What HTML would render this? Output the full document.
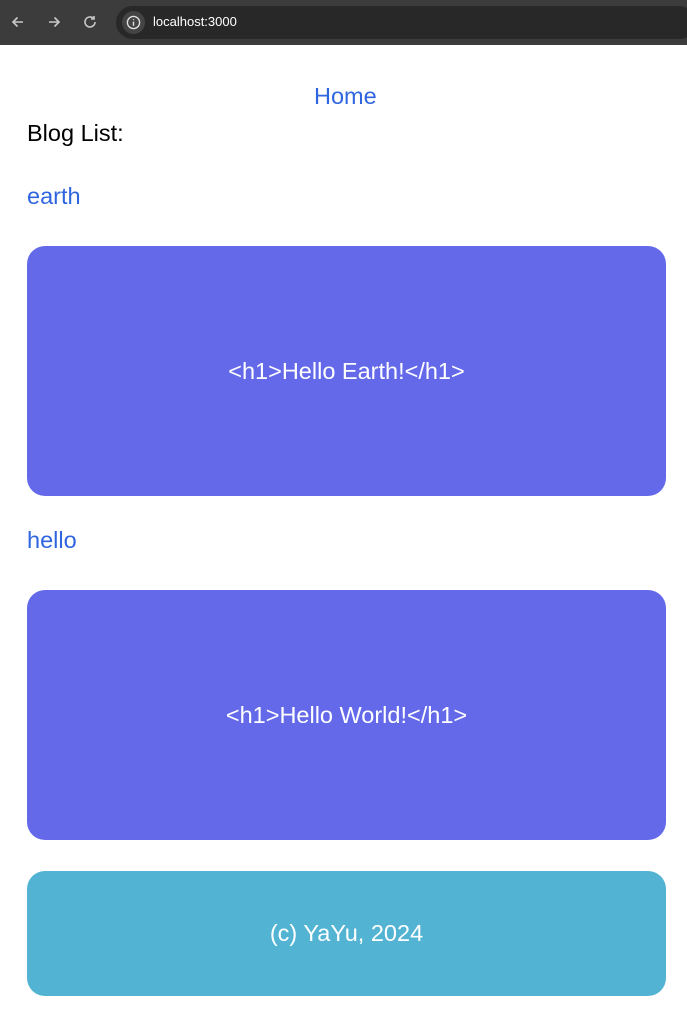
<!DOCTYPE html>
<html><head><meta charset="utf-8"><style>
body{margin:0;width:687px;height:1018px;background:#fff;font-family:"Liberation Sans",sans-serif;position:relative;overflow:hidden}
.bar{position:absolute;left:0;top:0;width:687px;height:45px;background:#3c3c3c}
.url{position:absolute;left:116px;top:6px;width:580px;height:33px;border-radius:17px;background:#282828}
.info{position:absolute;left:122px;top:11px;width:23px;height:23px;border-radius:50%;background:#444}
.t{position:absolute;color:#fff;font-size:13px}
.a{position:absolute;color:#2f66e0;font-size:23.5px}
.box{position:absolute;left:27px;width:639px;border-radius:18px;color:#fff;font-size:23.5px;display:flex;align-items:center;justify-content:center}
</style></head><body>
<div class="bar">
<svg style="position:absolute;left:10px;top:14px" width="16" height="16" viewBox="0 0 16 16" fill="none" stroke="#c8c8c8" stroke-width="1.6"><path d="M13 8H3M7.5 3.5L3 8l4.5 4.5"/></svg>
<svg style="position:absolute;left:46px;top:14px" width="16" height="16" viewBox="0 0 16 16" fill="none" stroke="#c8c8c8" stroke-width="1.6"><path d="M3 8h10M8.5 3.5L13 8l-4.5 4.5"/></svg>
<svg style="position:absolute;left:82px;top:14px" width="16" height="16" viewBox="0 0 16 16" fill="none" stroke="#c8c8c8" stroke-width="1.6"><path d="M13 8a5 5 0 1 1-1.5-3.6"/><path d="M12 2v3h-3"/></svg>
<div class="url"></div><div class="info"></div>
<svg style="position:absolute;left:126px;top:15px" width="15" height="15" viewBox="0 0 16 16" fill="none" stroke="#e0e0e0" stroke-width="1.5"><circle cx="8" cy="8" r="6.5"/><path d="M8 7v4.5M8 4.5v1"/></svg>
<div class="t" style="left:153px;top:14px">localhost:3000</div>
</div>
<div class="a" style="left:314px;top:83px">Home</div>
<div style="position:absolute;left:27px;top:120px;font-size:23.5px;color:#000">Blog List:</div>
<div class="a" style="left:27px;top:183px">earth</div>
<div class="box" style="top:246px;height:250px;background:#6469e9">&lt;h1&gt;Hello Earth!&lt;/h1&gt;</div>
<div class="a" style="left:27px;top:527px">hello</div>
<div class="box" style="top:590px;height:250px;background:#6469e9">&lt;h1&gt;Hello World!&lt;/h1&gt;</div>
<div class="box" style="top:871px;height:125px;background:#52b3d3">(c) YaYu, 2024</div>
</body></html>
